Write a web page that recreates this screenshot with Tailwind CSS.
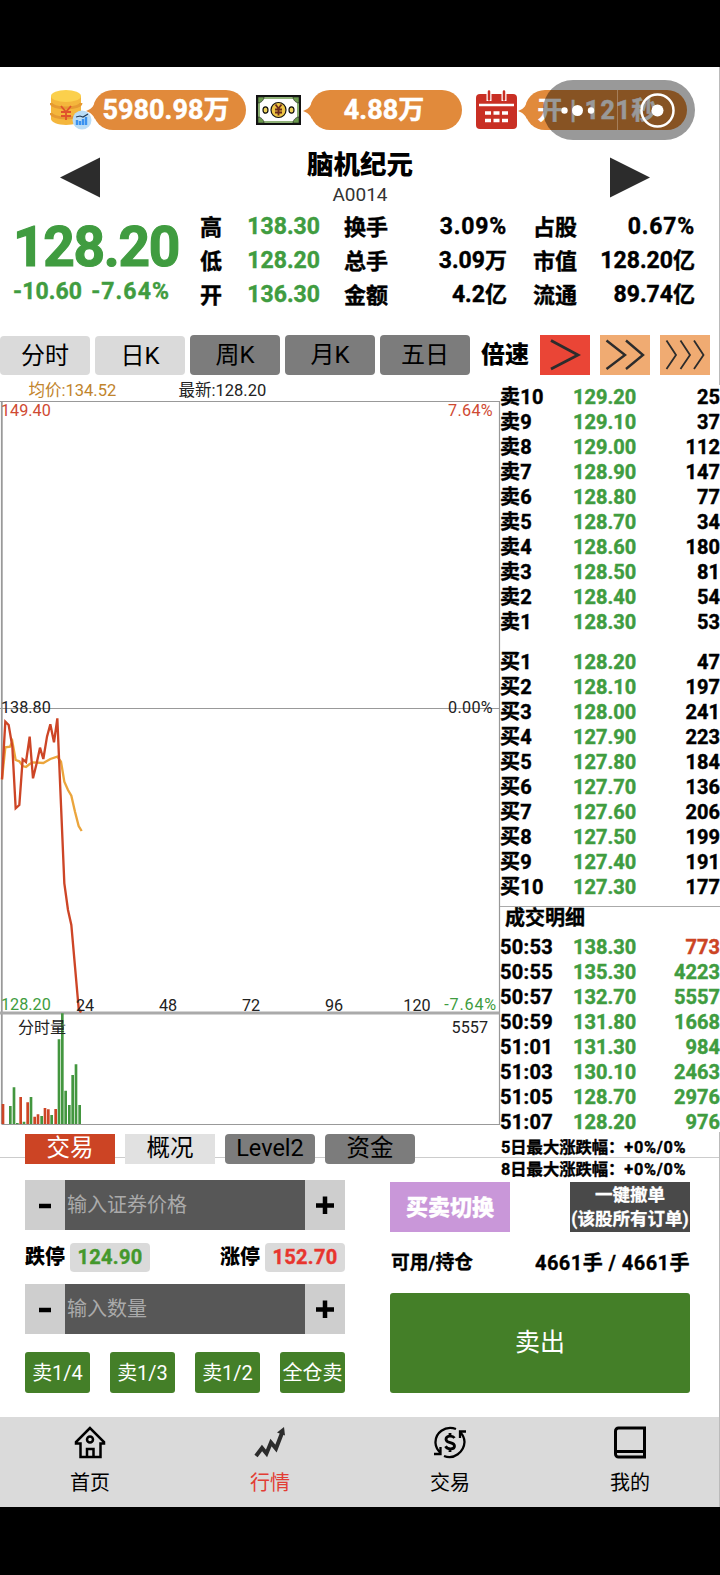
<!DOCTYPE html>
<html lang="zh-CN">
  <head>
    <meta charset="UTF-8" />
    <meta name="viewport" content="width=device-width, initial-scale=1.0" />
    <title>脑机纪元 A0014</title>
    <script src="https://cdn.jsdelivr.net/npm/@tailwindcss/browser@4"></script>
  </head>
  <body class="bg-black font-[Roboto,'Noto_Sans_CJK_SC',sans-serif] text-black">
    <div class="w-[720px] h-[1575px] pt-[67px] overflow-hidden">
      <div class="relative h-[1440px] bg-white flex flex-col overflow-hidden">
        <!-- Balance bar -->
        <header class="flex h-10 mt-[23px] pl-[50px] shrink-0 items-center text-white text-[27px] font-bold [-webkit-text-stroke:0.5px]">
          <svg width="42" height="42" viewBox="0 0 42 42">
            <path d="M1 7v23c0 3 7 6 15 6s15-3 15-6V7z" fill="#f4b63c" />
            <path d="M1 14c0 3 7 5 15 5s15-2 15-5M1 24c0 3 7 5 15 5s15-2 15-5" fill="none" stroke="#e69a32" stroke-width="3" />
            <ellipse cx="16" cy="7" rx="15" ry="6" fill="#fbd04c" />
            <path d="M11 17l5 6 5-6M16 23v8M11 23h10M11 27h10" fill="none" stroke="#e0522c" stroke-width="1.8" />
            <circle cx="32" cy="31" r="9.5" fill="#b9dcf6" />
            <path d="M27 36v-5M30 36v-4M33 36v-6M36 36v-8" stroke="#3b92f0" stroke-width="2.4" />
            <path d="M26 28l4-1 3 1 5-3" fill="none" stroke="#223a55" stroke-width="1.2" />
          </svg>
          <div class="relative ml-px w-[153px] h-10 rounded-full bg-[#e18a3b] flex items-center justify-center">
            <svg class="absolute -left-[7px] top-[13px]" width="12" height="16" viewBox="0 0 12 16"><path d="M0 8C5 6 7 4 9 0v16C7 12 5 10 0 8z" fill="#e18a3b" /></svg>
            <span class="-ml-[7px] mt-px">5980.98<span class="text-[26px]">万</span></span>
          </div>
          <svg class="ml-[10px]" width="45" height="30" viewBox="0 0 45 30">
            <rect x="1" y="1" width="43" height="28" fill="#fff" stroke="#111" stroke-width="2" />
            <path d="M3 3h39v24H3z" fill="none" stroke="#6c9a4e" stroke-width="1.6" />
            <path d="M2 2h6c0 3-3 6-6 6zM43 2h-6c0 3 3 6 6 6zM2 28h6c0-3-3-6-6-6zM43 28h-6c0-3 3-6 6-6z" fill="#6c9a4e" stroke="#222" stroke-width=".6" />
            <circle cx="22.5" cy="15" r="7.5" fill="#eec544" stroke="#111" stroke-width="1.2" />
            <ellipse cx="9.5" cy="15" rx="2.5" ry="3.2" fill="#eed35a" stroke="#111" stroke-width="1.2" />
            <ellipse cx="35.5" cy="15" rx="2.5" ry="3.2" fill="#eed35a" stroke="#111" stroke-width="1.2" />
            <path d="M19.5 9.500l3 4 3-4M22.500 13.500v7M19 14.500h7M19 17.500h7" fill="none" stroke="#6b2a1a" stroke-width="1.8" />
          </svg>
          <div class="relative ml-[9px] w-[152px] h-10 rounded-full bg-[#e18a3b] flex items-center justify-center">
            <svg class="absolute -left-[7px] top-[13px]" width="12" height="16" viewBox="0 0 12 16"><path d="M0 8C5 6 7 4 9 0v16C7 12 5 10 0 8z" fill="#e18a3b" /></svg>
            <span class="-ml-1 mt-px">4.88<span class="text-[26px]">万</span></span>
          </div>
          <svg class="ml-[14px]" width="41" height="40" viewBox="0 0 41 40">
            <rect x="0" y="4" width="41" height="35" rx="4" fill="#c92f24" />
            <path d="M13 4v7M28 4v7" stroke="#fff" stroke-width="5" />
            <path d="M13 1.500v8M28 1.500v8" stroke="#c92f24" stroke-width="2.500" stroke-linecap="round" />
            <path d="M3 15h35" stroke="#fff" stroke-width="2.500" />
            <path d="M9 23h23M9 30.500h23" stroke="#fff" stroke-width="3.400" stroke-dasharray="6 2.500" />
          </svg>
          <div class="relative ml-[8px] w-[162px] h-10 rounded-full bg-[#e18a3b] flex items-center justify-center">
            <svg class="absolute -left-[7px] top-[13px]" width="12" height="16" viewBox="0 0 12 16"><path d="M0 8C5 6 7 4 9 0v16C7 12 5 10 0 8z" fill="#e18a3b" /></svg>
            <span class="-ml-[18px] mt-px whitespace-nowrap text-[25px]">开<span class="tracking-[1.2px]"> | 121</span>秒</span>
          </div>
        </header>

        <!-- Mini program capsule -->
        <div class="absolute left-[543px] top-[13px] w-[152px] h-[60px] rounded-full bg-black/40">
          <svg width="152" height="60" viewBox="0 0 152 60" fill="#fff">
            <circle cx="21.5" cy="30.5" r="3.2" />
            <circle cx="34.5" cy="30.5" r="5.5" />
            <circle cx="48" cy="30.5" r="3.2" />
            <path d="M74.500 10v40" stroke="#fff" stroke-opacity=".25" />
            <circle cx="114.5" cy="30.5" r="16" fill="none" stroke="#fff" stroke-width="2.5" />
            <circle cx="114.5" cy="30.5" r="6" />
          </svg>
        </div>

        <!-- Stock switcher -->
        <div class="flex h-[70px] mt-[14px] pl-[60px] pr-[70px] shrink-0 justify-between">
          <svg class="mt-[13px]" width="40" height="41" viewBox="0 0 40 41"><path d="M0 20.500L40 .5v40z" fill="#2c2c2c" /></svg>
          <div class="text-center ml-[10px]">
            <h1 class="text-[26.5px] leading-[42px] font-black">脑机纪元</h1>
            <p class="text-[19px] leading-[18px] text-[#333]">A0014</p>
          </div>
          <svg class="mt-[13px]" width="40" height="41" viewBox="0 0 40 41"><path d="M40 20.500L0 .5v40z" fill="#2c2c2c" /></svg>
        </div>

        <!-- Quote -->
        <section class="flex h-[118px] shrink-0 font-bold [-webkit-text-stroke:0.4px]">
          <div class="w-[200px] pl-[13px] pt-[3px] text-[#409c40]">
            <p class="text-[55px] leading-[60px] tracking-[-1.3px] [-webkit-text-stroke:1.2px]">128.20</p>
            <p class="flex gap-[9px] text-[23px] leading-[30px]"><span class="tracking-[0.1px]">-10.60</span><span class="tracking-[1.1px]">-7.64%</span></p>
          </div>
          <div class="grid grid-cols-[47px_73px_24px_63px_100px_26px_62px_100px] auto-rows-[34px] -mt-[4px] items-center text-[23px] whitespace-nowrap">
            <span class="text-[22px]">高</span><span class="text-[#409c40] text-right">138.30</span><i></i>
            <span class="text-[22px]">换手</span><span class="text-right tracking-[0.8px]">3.09%</span><i></i>
            <span class="text-[22px]">占股</span><span class="text-right tracking-[0.8px]">0.67%</span>
            <span class="text-[22px]">低</span><span class="text-[#409c40] text-right">128.20</span><i></i>
            <span class="text-[22px]">总手</span><span class="text-right">3.09<span class="text-[22px]">万</span></span><i></i>
            <span class="text-[22px]">市值</span><span class="text-right">128.20<span class="text-[22px]">亿</span></span>
            <span class="text-[22px]">开</span><span class="text-[#409c40] text-right">136.30</span><i></i>
            <span class="text-[22px]">金额</span><span class="text-right">4.2<span class="text-[22px]">亿</span></span><i></i>
            <span class="text-[22px]">流通</span><span class="text-right">89.74<span class="text-[22px]">亿</span></span>
          </div>
        </section>

        <!-- Period tabs and speed -->
        <nav class="flex h-10 mt-[3px] shrink-0 items-end gap-[5px] text-[24px]">
          <div class="w-[90px] h-[39px] rounded bg-[#dadada] flex items-center justify-center">分时</div>
          <div class="w-[90px] h-[39px] rounded bg-[#dadada] flex items-center justify-center">日K</div>
          <div class="w-[90px] h-10 rounded bg-[#7c7c7c] flex items-center justify-center">周K</div>
          <div class="w-[90px] h-10 rounded bg-[#7c7c7c] flex items-center justify-center">月K</div>
          <div class="w-[90px] h-10 rounded bg-[#7c7c7c] flex items-center justify-center">五日</div>
          <div class="w-[60px] h-10 flex items-center justify-center font-black">倍速</div>
          <div class="flex gap-[10px]">
            <svg class="bg-[#ea4536]" width="50" height="40" viewBox="0 0 50 40" fill="none" stroke="#2c2c2c" stroke-width="2.8"><path d="M11 5.500l27 14.500-27 14" /></svg>
            <svg class="bg-[#f0ab72]" width="50" height="40" viewBox="0 0 50 40" fill="none" stroke="#2c2c2c" stroke-width="2.4"><path d="M6.500 5.500L25 20 6.500 34M26 5.500L43 20 26 34" /></svg>
            <svg class="bg-[#f0ab72]" width="50" height="40" viewBox="0 0 50 40" fill="none" stroke="#2c2c2c" stroke-width="1.8"><path d="M6.500 5.500L16 20 6.500 34M20.500 5.500L30 20l-9.500 14M34 5.500L43.500 20 34 34" /></svg>
          </div>
        </nav>

        <main class="relative flex h-[806px] shrink-0">
          <div class="absolute left-0 top-[782px] w-full h-px bg-[#ccc]"></div>
          <div class="relative w-[500px]">
            <!-- Intraday chart -->
            <svg class="block mt-[5px]" width="501" height="746" viewBox="0 0 501 746" font-size="16.2">
              <g fill="none" stroke="#999" stroke-width="1.2">
                <path d="M0 21.500H499.500V744.500H1.500" />
                <path d="M1.800 21v723" stroke-width="1.8" />
                <path d="M0 328.500h499.500" />
                <path d="M0 633h499.500" stroke-width="3" stroke="#aaa" />
              </g>
              <g transform="translate(0 310) scale(.33333)" fill="none" stroke-width="7">
                <polyline stroke="#eba53c" points="6,268 16,172 30,170 37,155 47,210 58,214 68,228 78,231 89,222 99,217 130,219 151,207 172,200 183,215 193,275 204,300 214,317 225,365 236,408 245,423" />
                <polyline stroke="#cd4526" points="6,268 16,95 26,105 37,170 47,355 58,345 68,208 78,216 89,140 99,265 110,220 120,173 130,207 141,140 151,103 162,157 172,85 183,345 193,580 204,660 214,705 225,830 236,955 243,968" />
                <path stroke="#cd4526" stroke-width="8" d="M9 1302V1242M62 1302V1221M83 1302V1237M104 1302V1280M114 1302V1273M135 1302V1254M145 1302V1258M167 1302V1257" />
                <path stroke="#43963f" stroke-width="8" d="M31 1302V1248M42 1302V1192M52 1302V1299M72 1302V1295M93 1302V1221M125 1302V1278M155 1302V1275M177 1302V1048M187 1302V970M197 1302V1202M208 1302V1245M218 1302V1155M228 1302V1123M239 1302V1245" />
              </g>
              <g fill="#222">
                <text x="28.5" y="16" fill="#c1842c" font-size="16.5">均价:134.52</text>
                <text x="178.5" y="16" font-size="16.5">最新:128.20</text>
                <text x="1" y="35.5" fill="#cf4a32">149.40</text>
                <text x="493" y="35.5" fill="#cf4a32" text-anchor="end" letter-spacing=".3">7.64%</text>
                <text x="1" y="332.5">138.80</text>
                <text x="493" y="332.5" text-anchor="end" letter-spacing=".3">0.00%</text>
                <text x="1" y="630" fill="#409c40">128.20</text>
                <text x="497" y="630" fill="#409c40" text-anchor="end" letter-spacing=".8">-7.64%</text>
                <g text-anchor="middle">
                  <text x="85" y="631">24</text>
                  <text x="168" y="631">48</text>
                  <text x="251" y="631">72</text>
                  <text x="334" y="631">96</text>
                  <text x="417" y="631">120</text>
                </g>
                <text x="18" y="652.5" font-size="16">分时量</text>
                <text x="488" y="652.5" text-anchor="end">5557</text>
              </g>
            </svg>
            <div class="flex gap-[10px] pl-[25px] mt-2 text-[23.5px]">
              <div class="w-[90px] h-[30px] bg-[#cc4424] text-white flex items-center justify-center">交易</div>
              <div class="w-[90px] h-[30px] bg-[#e1e1e1] flex items-center justify-center">概况</div>
              <div class="w-[90px] h-[30px] rounded bg-[#7c7c7c] flex items-center justify-center">Level2</div>
              <div class="w-[90px] h-[30px] rounded bg-[#7c7c7c] flex items-center justify-center">资金</div>
            </div>
          </div>

          <!-- Order book and trades -->
          <aside class="relative w-[220px] text-[20px] font-bold whitespace-nowrap [-webkit-text-stroke:0.4px]">
            <div id="asks" class="mt-[10px]"></div>
            <div id="bids" class="mt-[15px]"></div>
            <div class="mt-[6px] border-t border-[#aaa] pl-[5px] h-[29px] leading-[22px]">成交明细</div>
            <div id="trades"></div>
            <div class="text-[16.3px] leading-[22px] mt-[2px] pl-px">
              <p>5日最大涨跌幅：<span class="tracking-[0.7px]">+0%/0%</span></p>
              <p>8日最大涨跌幅：<span class="tracking-[0.7px]">+0%/0%</span></p>
            </div>
          </aside>
        </main>

        <!-- Order form -->
        <section class="flex pl-[25px] gap-[45px] shrink-0 h-[236px]">
          <div class="w-[320px] flex flex-col text-[20px] -mt-px">
            <div class="flex h-[50px]">
              <button class="w-10 bg-[#cecece] flex items-center justify-center"><svg width="18" height="18" stroke="#000" stroke-width="4.5"><path d="M3 10h12" /></svg></button>
              <div class="w-[240px] bg-[#575757] text-[#aaa] pl-[2px] flex items-center">输入证券价格</div>
              <button class="w-10 bg-[#cecece] flex items-center justify-center"><svg width="18" height="18" stroke="#000" stroke-width="4.5"><path d="M0 9.500h18M9 .5v18" /></svg></button>
            </div>
            <div class="flex h-[54px] items-center justify-between font-bold">
              <div class="flex items-center gap-[5px]"><span class="font-black">跌停</span><span class="w-20 h-[29px] rounded bg-[#dadada] text-[#44982c] tracking-[0.3px] flex items-center justify-center [-webkit-text-stroke:0.4px]">124.90</span></div>
              <div class="flex items-center gap-[5px]"><span class="font-black">涨停</span><span class="w-20 h-[29px] rounded bg-[#dadada] text-[#e8352e] tracking-[0.3px] flex items-center justify-center [-webkit-text-stroke:0.4px]">152.70</span></div>
            </div>
            <div class="flex h-[50px]">
              <button class="w-10 bg-[#cecece] flex items-center justify-center"><svg width="18" height="18" stroke="#000" stroke-width="4.5"><path d="M3 10h12" /></svg></button>
              <div class="w-[240px] bg-[#575757] text-[#aaa] pl-[2px] flex items-center">输入数量</div>
              <button class="w-10 bg-[#cecece] flex items-center justify-center"><svg width="18" height="18" stroke="#000" stroke-width="4.5"><path d="M0 9.500h18M9 .5v18" /></svg></button>
            </div>
            <div class="flex justify-between mt-[18px] text-white whitespace-nowrap">
              <button class="w-[65px] h-[41px] rounded-[3px] bg-[#447f28]">卖1/4</button>
              <button class="w-[65px] h-[41px] rounded-[3px] bg-[#447f28]">卖1/3</button>
              <button class="w-[65px] h-[41px] rounded-[3px] bg-[#447f28]">卖1/2</button>
              <button class="w-[65px] h-[41px] rounded-[3px] bg-[#447f28]">全仓卖</button>
            </div>
          </div>
          <div class="w-[300px] font-bold mt-px [-webkit-text-stroke:0.3px]">
            <div class="flex justify-between text-white">
              <button class="w-[120px] h-[50px] bg-[#c997d9] text-[22px] font-black">买卖切换</button>
              <button class="w-[120px] h-[50px] bg-[#494949] text-[17.5px] leading-[24px] whitespace-nowrap flex flex-col items-center justify-center"><span>一键撤单</span><span>(该股所有订单)</span></button>
            </div>
            <div class="flex h-[61px] items-center justify-between">
              <span class="text-[18.8px] pl-px pt-px">可用/持仓</span>
              <span class="text-[20px] tracking-[0.45px]">4661手 / 4661手</span>
            </div>
            <button class="block w-[300px] h-[100px] rounded-[3px] bg-[#447f28] text-white text-[25px] font-normal [-webkit-text-stroke:0]">卖出</button>
          </div>
        </section>

        <!-- Tab bar -->
        <footer class="grid grid-cols-4 h-[90px] shrink-0 mt-auto bg-[#dadada] text-[20px] text-center">
          <div class="flex flex-col items-center pt-[9px]">
            <svg width="32" height="33" viewBox="0 0 32 33" fill="none" stroke="#000" stroke-width="2.5"><path d="M16 2L2 16v1.500h4.500V31h20V17.500H30V16z" /><circle cx="16" cy="13.5" r="3" /><path d="M13 31v-8h6.500v8" /></svg>
            <span class="leading-[30px] mt-[9px]">首页</span>
          </div>
          <div class="flex flex-col items-center pt-[9px] text-[#e23c34]">
            <svg width="32" height="33" viewBox="0 0 32 33" fill="none" stroke="#2c2c2c" stroke-width="4"><path d="M2 30l6-8 4.500 5.500 4.500-11 5 6L28 7" /><path d="M30 1l1 8.500-8-3z" fill="#2c2c2c" stroke="none" /></svg>
            <span class="leading-[30px] mt-[9px]">行情</span>
          </div>
          <div class="flex flex-col items-center pt-[9px]">
            <svg width="32" height="33" viewBox="0 0 32 33" fill="none" stroke="#000" stroke-width="2.3"><path d="M22 3C11-1 1 7 1.500 17c.2 4 2 7 5 10M0 28h6.500v-7M10 30c10 4 20-4 20.500-14 0-4-1.500-7-4.500-10M26 12V5.500h6" /><path d="M20.500 12c-2-3-8.500-2.500-8.500 1.200 0 4.600 8.500 2.300 8.500 6.800 0 3.800-7 3.800-9 .3M16 7v3.500M16 22.500v3.500" stroke-width="2.800" /></svg>
            <span class="leading-[30px] mt-[9px]">交易</span>
          </div>
          <div class="flex flex-col items-center pt-[9px]">
            <svg width="32" height="33" viewBox="0 0 32 33" fill="none" stroke="#000" stroke-width="3"><path d="M30.500 2H4.500a3 3 0 0 0-3 3v23a3 3 0 0 0 3 3h26zM2 25.500h28.500" /></svg>
            <span class="leading-[30px] mt-[9px]">我的</span>
          </div>
        </footer>
        <div class="absolute right-0 top-0 w-px h-[318px] bg-[#bbb]"></div>
        <div class="absolute right-0 top-[1065px] w-px h-[375px] bg-[#bbb]"></div>
      </div>
    </div>

    <script>
      const asks = [
        ["卖10", "129.20", 25], ["卖9", "129.10", 37], ["卖8", "129.00", 112], ["卖7", "128.90", 147], ["卖6", "128.80", 77],
        ["卖5", "128.70", 34], ["卖4", "128.60", 180], ["卖3", "128.50", 81], ["卖2", "128.40", 54], ["卖1", "128.30", 53],
      ];
      const bids = [
        ["买1", "128.20", 47], ["买2", "128.10", 197], ["买3", "128.00", 241], ["买4", "127.90", 223], ["买5", "127.80", 184],
        ["买6", "127.70", 136], ["买7", "127.60", 206], ["买8", "127.50", 199], ["买9", "127.40", 191], ["买10", "127.30", 177],
      ];
      const trades = [
        ["50:53", "138.30", 773, "text-[#cc4424]"], ["50:55", "135.30", 4223, "text-[#409c40]"],
        ["50:57", "132.70", 5557, "text-[#409c40]"], ["50:59", "131.80", 1668, "text-[#409c40]"],
        ["51:01", "131.30", 984, "text-[#409c40]"], ["51:03", "130.10", 2463, "text-[#409c40]"],
        ["51:05", "128.70", 2976, "text-[#409c40]"], ["51:07", "128.20", 976, "text-[#409c40]"],
      ];

      function renderRows(id, rows) {
        document.getElementById(id).innerHTML = rows
          .map(
            ([label, price, volume, color = ""]) => `
            <div class="flex h-[25px] leading-[25px]">
              <span class="w-[73px] tracking-[0.3px]">${label}</span>
              <span class="w-[63px] text-[#409c40]">${price}</span>
              <span class="flex-1 text-right ${color}">${volume}</span>
            </div>`
          )
          .join("");
      }

      renderRows("asks", asks);
      renderRows("bids", bids);
      renderRows("trades", trades);
    </script>
  </body>
</html>
